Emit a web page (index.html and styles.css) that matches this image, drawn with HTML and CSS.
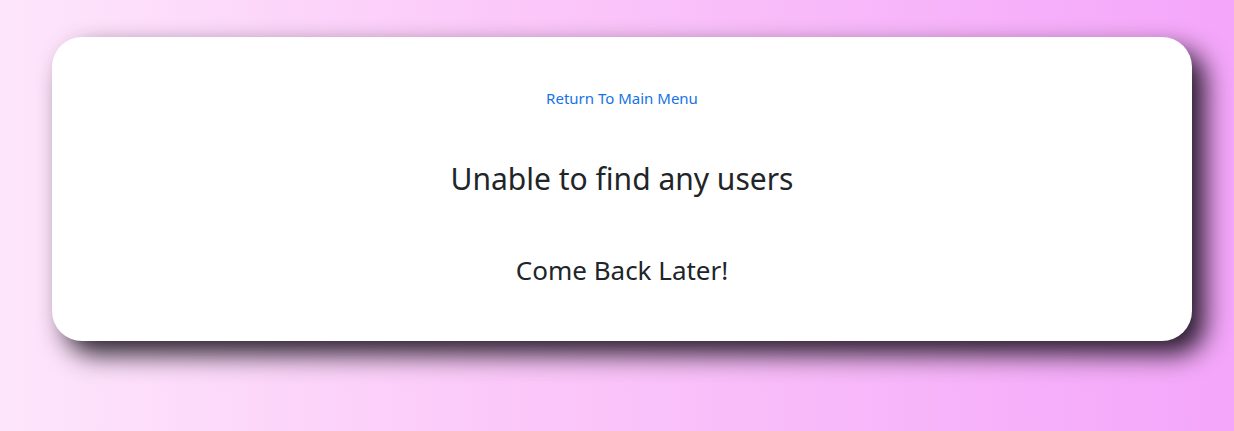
FILE: index.html
```html
<!DOCTYPE html>
<html lang="en">
<head>
<meta charset="utf-8">
<title>Users</title>
<link rel="stylesheet" href="styles.css">
</head>
<body>
<main class="page">
  <section class="card">
    <a class="back-link" href="#">Return To Main Menu</a>
    <h2 class="title">Unable to find any users</h2>
    <h3 class="subtitle">Come Back Later!</h3>
  </section>
</main>
</body>
</html>
```

FILE: styles.css
```css
html, body {
  margin: 0;
  padding: 0;
}
body {
  width: 1234px;
  height: 431px;
  overflow: hidden;
  background: linear-gradient(90deg, #fde6fb 0%, #fbc9f9 40%, #f4a6fa 100%);
  font-family: "Noto Sans", "Open Sans", sans-serif;
  color: #212529;
}
.page {
  padding: 37px 42px 0 52px;
}
.card {
  box-sizing: border-box;
  width: 1140px;
  height: 304px;
  background: #fff;
  border-radius: 30px;
  box-shadow: 13px 13px 26px rgba(15, 10, 20, 0.9);
  display: flex;
  flex-direction: column;
  align-items: center;
  padding-top: 49px;
}
.back-link {
  color: #1672e6;
  text-decoration: none;
  font-size: 15px;
  line-height: 24px;
}
.title {
  margin: 50px 0 0;
  font-weight: 400;
  font-size: 30px;
  line-height: 38px;
}
.subtitle {
  margin: 55px 0 0;
  font-weight: 400;
  font-size: 26px;
  line-height: 34px;
}
```
